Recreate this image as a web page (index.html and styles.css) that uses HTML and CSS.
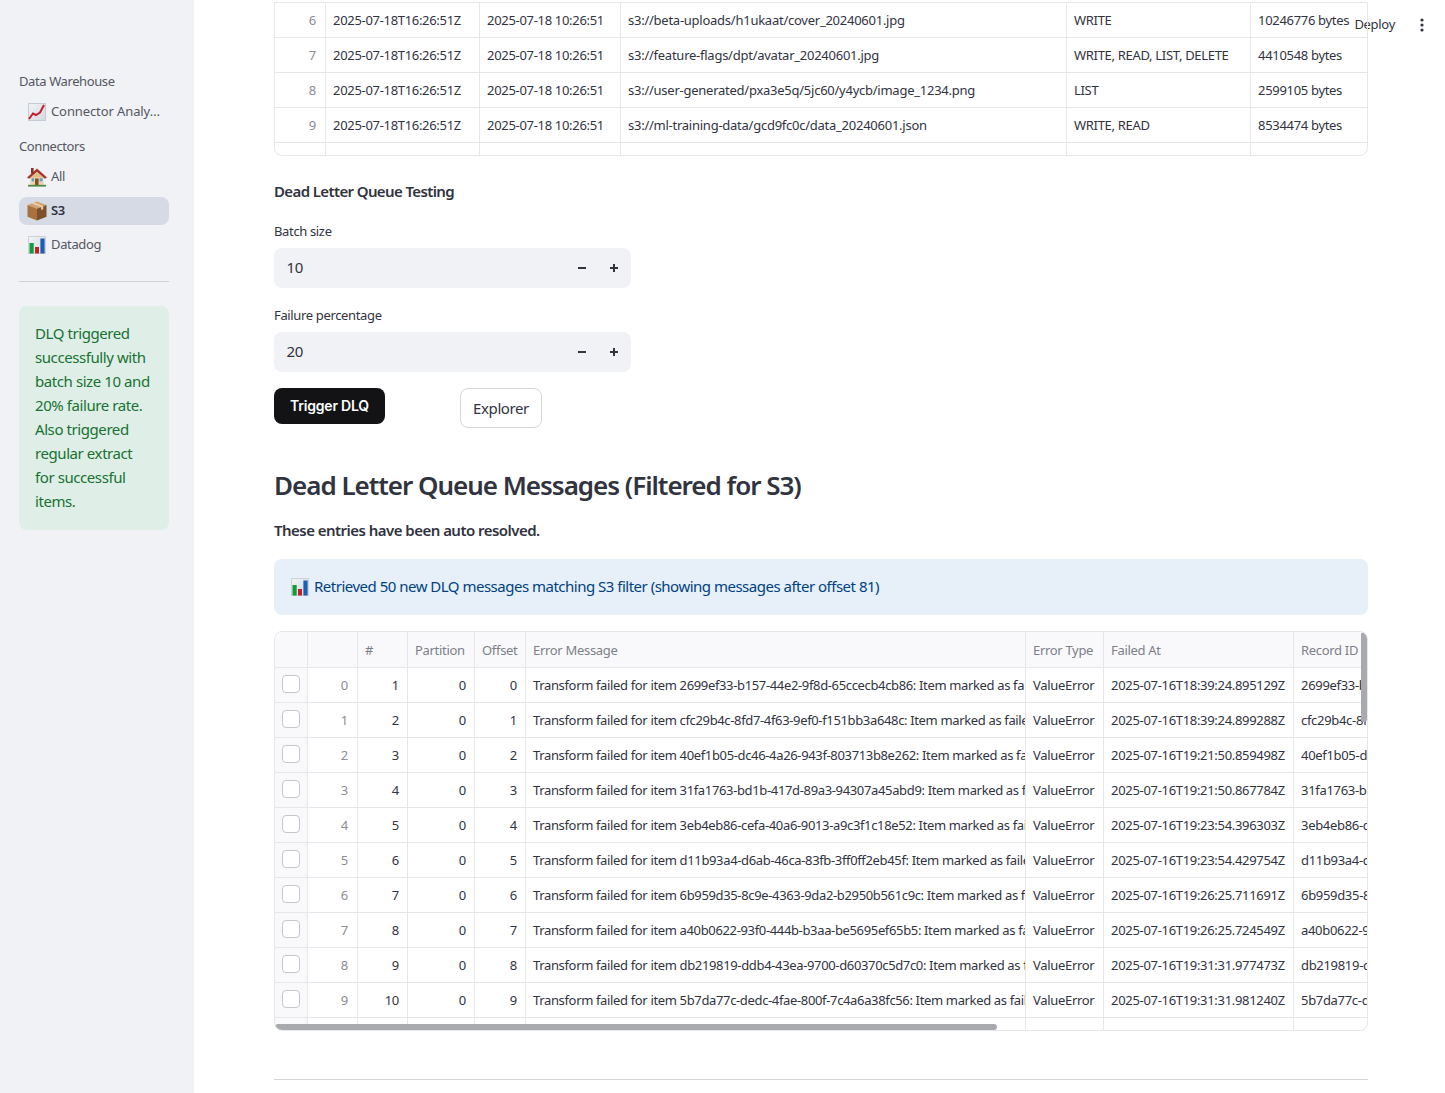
FILE: index.html
```html
<!DOCTYPE html>
<html lang="en">
<head>
    <meta charset="UTF-8">
    <title>S3 Connector</title>
    <link rel="stylesheet" href="styles.css">
</head>
<body>
    <svg class="defs" width="0" height="0">
        <linearGradient id="tile" x1="0" y1="0" x2="1" y2="1">
            <stop offset="0" stop-color="#f1f3f6"/>
            <stop offset="1" stop-color="#d3d9e1"/>
        </linearGradient>
        <symbol id="emoji-chart" viewBox="0 0 18 18">
            <rect x="0.5" y="0.5" width="17" height="17" fill="url(#tile)" stroke="#c5ccd6"/>
            <path d="M1 16 L5 10.5 L8 12 L12 9.5 L16 2" fill="none" stroke="#c3202b" stroke-width="2"/>
        </symbol>
        <symbol id="emoji-bars" viewBox="0 0 18 18">
            <rect x="0.5" y="0.5" width="17" height="17" fill="url(#tile)" stroke="#ccd2da"/>
            <rect x="1.5" y="7" width="4.2" height="10.5" fill="#0f9d3a"/>
            <rect x="7" y="11" width="4" height="6.5" fill="#c4202a"/>
            <rect x="12.4" y="2.5" width="4.2" height="15" fill="#1a5fb4"/>
        </symbol>
        <symbol id="emoji-house" viewBox="0 0 20 20">
            <rect x="3.5" y="9" width="13" height="9.5" fill="#efd5a5"/>
            <path d="M0 10.5 L10 1.5 L20 10.5 L17.8 11.8 L10 5 L2.2 11.8 Z" fill="#a5372d"/>
            <path d="M10 5 L3.5 10.5 L16.5 10.5 Z" fill="#e2bd85"/>
            <rect x="4" y="1" width="2.6" height="5.5" fill="#8a2f28"/>
            <rect x="8" y="11.5" width="3.6" height="7" fill="#7f4f33"/>
            <rect x="12.6" y="11.2" width="3" height="3.2" fill="#5f9fd6"/>
            <rect x="4.6" y="11.2" width="2.4" height="3.2" fill="#5f9fd6"/>
            <rect x="1" y="17.8" width="18" height="1.8" fill="#4f8a45"/>
        </symbol>
        <symbol id="emoji-box" viewBox="0 0 20 20">
            <path d="M10 0.5 L19.5 4 L10 7.8 L0.5 4 Z" fill="#d2a273"/>
            <path d="M0.5 4 L10 7.8 L10 19.5 L0.5 15.8 Z" fill="#a9713f"/>
            <path d="M19.5 4 L10 7.8 L10 19.5 L19.5 15.8 Z" fill="#7d4f2a"/>
            <path d="M4.8 2.4 L14.2 6 L14.2 9 L16.2 8.2 L16.2 5.2 L7 1.6 Z" fill="#ecd2ad"/>
        </symbol>
        <symbol id="icon-minus" viewBox="0 0 10 10">
            <rect x="1" y="4" width="8" height="2" fill="#31333f"/>
        </symbol>
        <symbol id="icon-plus" viewBox="0 0 10 10">
            <path d="M1 4h3V1h2v3h3v2H6v3H4V6H1z" fill="#31333f"/>
        </symbol>
    </svg>

    <div class="app">
        <!-- Sidebar -->
        <aside class="sidebar">
            <div class="nav-heading">Data Warehouse</div>
            <a class="nav-item"><svg class="nav-icon"><use href="#emoji-chart"/></svg><span class="nav-label nav-label-long">Connector Analy…</span></a>
            <div class="nav-heading nav-heading-second">Connectors</div>
            <a class="nav-item"><svg class="nav-icon nav-icon-wide"><use href="#emoji-house"/></svg><span class="nav-label">All</span></a>
            <a class="nav-item active"><svg class="nav-icon nav-icon-wide"><use href="#emoji-box"/></svg><span class="nav-label">S3</span></a>
            <a class="nav-item"><svg class="nav-icon"><use href="#emoji-bars"/></svg><span class="nav-label">Datadog</span></a>
            <hr class="nav-divider">
            <div class="success-box">DLQ triggered<br>successfully with<br>batch size 10 and<br>20% failure rate.<br>Also triggered<br>regular extract<br>for successful<br>items.</div>
        </aside>

        <!-- Main content -->
        <main class="main">
            <div class="toolbar">
                <span class="deploy">Deploy</span>
                <svg class="kebab" width="4" height="14" viewBox="0 0 4 14"><circle cx="2" cy="2" r="1.6"/><circle cx="2" cy="7" r="1.6"/><circle cx="2" cy="12" r="1.6"/></svg>
            </div>

            <div class="frame frame-top">
                <table class="grid grid-files">
                    <colgroup><col class="f0"><col class="f1"><col class="f2"><col class="f3"><col class="f4"><col class="f5"></colgroup>
                    <tr><td class="idx">6</td><td>2025-07-18T16:26:51Z</td><td>2025-07-18 10:26:51</td><td class="path">s3://beta-uploads/h1ukaat/cover_20240601.jpg</td><td>WRITE</td><td>10246776 bytes</td></tr>
                    <tr><td class="idx">7</td><td>2025-07-18T16:26:51Z</td><td>2025-07-18 10:26:51</td><td class="path">s3://feature-flags/dpt/avatar_20240601.jpg</td><td>WRITE, READ, LIST, DELETE</td><td>4410548 bytes</td></tr>
                    <tr><td class="idx">8</td><td>2025-07-18T16:26:51Z</td><td>2025-07-18 10:26:51</td><td class="path">s3://user-generated/pxa3e5q/5jc60/y4ycb/image_1234.png</td><td>LIST</td><td>2599105 bytes</td></tr>
                    <tr><td class="idx">9</td><td>2025-07-18T16:26:51Z</td><td>2025-07-18 10:26:51</td><td class="path">s3://ml-training-data/gcd9fc0c/data_20240601.json</td><td>WRITE, READ</td><td>8534474 bytes</td></tr>
                    <tr><td class="idx">10</td><td>2025-07-18T16:26:51Z</td><td>2025-07-18 10:26:51</td><td class="path">s3://customer-archive/x7k2m9p/v3hqt/l8wzn/backups/report_20240601.parquet</td><td>WRITE</td><td>6120934 bytes</td></tr>
                </table>
            </div>

            <h3 class="section-title">Dead Letter Queue Testing</h3>

            <label class="field-label field-first">Batch size</label>
            <div class="stepper">
                <span class="stepper-value">10</span>
                <svg class="stepper-btn"><use href="#icon-minus"/></svg>
                <svg class="stepper-btn"><use href="#icon-plus"/></svg>
            </div>

            <label class="field-label">Failure percentage</label>
            <div class="stepper">
                <span class="stepper-value">20</span>
                <svg class="stepper-btn"><use href="#icon-minus"/></svg>
                <svg class="stepper-btn"><use href="#icon-plus"/></svg>
            </div>

            <div class="actions">
                <button class="btn-primary">Trigger DLQ</button>
                <button class="btn-outline">Explorer</button>
            </div>

            <h2 class="page-heading">Dead Letter Queue Messages (Filtered for S3)</h2>
            <p class="resolved">These entries have been auto resolved.</p>

            <div class="info-box"><svg class="info-icon"><use href="#emoji-bars"/></svg><span class="info-text">Retrieved 50 new DLQ messages matching S3 filter (showing messages after offset 81)</span></div>

            <div class="frame frame-dlq">
                <table class="grid grid-dlq">
                    <colgroup><col class="d0"><col class="d1"><col class="d2"><col class="d3"><col class="d4"><col class="d5"><col class="d6"><col class="d7"><col class="d8"></colgroup>
                    <tr class="head"><th class="check"></th><th></th><th>#</th><th>Partition</th><th>Offset</th><th>Error Message</th><th>Error Type</th><th>Failed At</th><th>Record ID</th></tr>
                    <tr><td class="check"><span class="box"></span></td><td class="idx">0</td><td class="num">1</td><td class="num">0</td><td class="num">0</td><td class="msg">Transform failed for item 2699ef33-b157-44e2-9f8d-65ccecb4cb86: Item marked as failed</td><td>ValueError</td><td>2025-07-16T18:39:24.895129Z</td><td>2699ef33-b157-44e2-9f8d-65ccecb4cb86</td></tr>
                    <tr><td class="check"><span class="box"></span></td><td class="idx">1</td><td class="num">2</td><td class="num">0</td><td class="num">1</td><td class="msg">Transform failed for item cfc29b4c-8fd7-4f63-9ef0-f151bb3a648c: Item marked as failed</td><td>ValueError</td><td>2025-07-16T18:39:24.899288Z</td><td>cfc29b4c-8fd7-4f63-9ef0-f151bb3a648c</td></tr>
                    <tr><td class="check"><span class="box"></span></td><td class="idx">2</td><td class="num">3</td><td class="num">0</td><td class="num">2</td><td class="msg">Transform failed for item 40ef1b05-dc46-4a26-943f-803713b8e262: Item marked as failed</td><td>ValueError</td><td>2025-07-16T19:21:50.859498Z</td><td>40ef1b05-dc46-4a26-943f-803713b8e262</td></tr>
                    <tr><td class="check"><span class="box"></span></td><td class="idx">3</td><td class="num">4</td><td class="num">0</td><td class="num">3</td><td class="msg">Transform failed for item 31fa1763-bd1b-417d-89a3-94307a45abd9: Item marked as failed</td><td>ValueError</td><td>2025-07-16T19:21:50.867784Z</td><td>31fa1763-bd1b-417d-89a3-94307a45abd9</td></tr>
                    <tr><td class="check"><span class="box"></span></td><td class="idx">4</td><td class="num">5</td><td class="num">0</td><td class="num">4</td><td class="msg">Transform failed for item 3eb4eb86-cefa-40a6-9013-a9c3f1c18e52: Item marked as failed</td><td>ValueError</td><td>2025-07-16T19:23:54.396303Z</td><td>3eb4eb86-cefa-40a6-9013-a9c3f1c18e52</td></tr>
                    <tr><td class="check"><span class="box"></span></td><td class="idx">5</td><td class="num">6</td><td class="num">0</td><td class="num">5</td><td class="msg">Transform failed for item d11b93a4-d6ab-46ca-83fb-3ff0ff2eb45f: Item marked as failed</td><td>ValueError</td><td>2025-07-16T19:23:54.429754Z</td><td>d11b93a4-d6ab-46ca-83fb-3ff0ff2eb45f</td></tr>
                    <tr><td class="check"><span class="box"></span></td><td class="idx">6</td><td class="num">7</td><td class="num">0</td><td class="num">6</td><td class="msg">Transform failed for item 6b959d35-8c9e-4363-9da2-b2950b561c9c: Item marked as failed</td><td>ValueError</td><td>2025-07-16T19:26:25.711691Z</td><td>6b959d35-8c9e-4363-9da2-b2950b561c9c</td></tr>
                    <tr><td class="check"><span class="box"></span></td><td class="idx">7</td><td class="num">8</td><td class="num">0</td><td class="num">7</td><td class="msg">Transform failed for item a40b0622-93f0-444b-b3aa-be5695ef65b5: Item marked as failed</td><td>ValueError</td><td>2025-07-16T19:26:25.724549Z</td><td>a40b0622-93f0-444b-b3aa-be5695ef65b5</td></tr>
                    <tr><td class="check"><span class="box"></span></td><td class="idx">8</td><td class="num">9</td><td class="num">0</td><td class="num">8</td><td class="msg">Transform failed for item db219819-ddb4-43ea-9700-d60370c5d7c0: Item marked as failed</td><td>ValueError</td><td>2025-07-16T19:31:31.977473Z</td><td>db219819-ddb4-43ea-9700-d60370c5d7c0</td></tr>
                    <tr><td class="check"><span class="box"></span></td><td class="idx">9</td><td class="num">10</td><td class="num">0</td><td class="num">9</td><td class="msg">Transform failed for item 5b7da77c-dedc-4fae-800f-7c4a6a38fc56: Item marked as failed</td><td>ValueError</td><td>2025-07-16T19:31:31.981240Z</td><td>5b7da77c-dedc-4fae-800f-7c4a6a38fc56</td></tr>
                    <tr><td class="check"><span class="box"></span></td><td class="idx">10</td><td class="num">11</td><td class="num">0</td><td class="num">10</td><td class="msg">Transform failed for item 8e1fd2b7-4c0a-4d19-b6f3-2a97c1e05d48: Item marked as failed</td><td>ValueError</td><td>2025-07-16T19:34:12.402117Z</td><td>8e1fd2b7-4c0a-4d19-b6f3-2a97c1e05d48</td></tr>
                </table>
                <div class="scroll-x"></div>
                <div class="scroll-y"></div>
            </div>

            <hr class="main-divider">
        </main>
    </div>
</body>
</html>
```
FILE: styles.css
```css
/* Page shell */
html, body {
    margin: 0;
    padding: 0;
    height: 100%;
    overflow: hidden;
}

body {
    font-family: "Noto Sans", sans-serif;
    color: #31333f;
    background: #ffffff;
}

.defs {
    position: absolute;
}

.app {
    display: flex;
    height: 100vh;
}

/* Sidebar */
.sidebar {
    width: 194px;
    flex-shrink: 0;
    box-sizing: border-box;
    padding: 71px 25px 0 19px;
    background: #f0f2f6;
    display: flex;
    flex-direction: column;
}

.nav-heading {
    font-size: 13px;
    line-height: 20px;
    letter-spacing: -0.4px;
    color: #555762;
    margin-bottom: 7px;
}

.nav-heading-second {
    margin-top: 4px;
}

.nav-item {
    display: flex;
    align-items: center;
    gap: 5px;
    height: 28px;
    padding-left: 9px;
    margin-bottom: 6px;
    border-radius: 8px;
    font-size: 13px;
    letter-spacing: -0.35px;
    color: #555762;
}

.nav-item.active {
    background: #d5dae5;
    color: #31333f;
    font-weight: 600;
}

.nav-label {
    padding-bottom: 2px;
}

.nav-label-long {
    letter-spacing: -0.1px;
}

.nav-icon {
    width: 18px;
    height: 18px;
    flex-shrink: 0;
}

.nav-icon-wide {
    width: 20px;
    height: 20px;
    margin: 0 -1px;
}

.nav-divider {
    width: 100%;
    margin: 16px 0 24px;
    border: none;
    border-top: 1px solid #cfd1d6;
}

.success-box {
    padding: 15px 16px 17px;
    border-radius: 8px;
    background: #dfeee6;
    color: #177233;
    font-size: 15px;
    line-height: 24px;
    letter-spacing: -0.42px;
    white-space: nowrap;
}

/* Main column */
.main {
    flex: 1;
    min-width: 0;
    box-sizing: border-box;
    padding: 2px 77px 0 80px;
    position: relative;
    overflow: hidden;
}

.toolbar {
    position: absolute;
    top: 15px;
    right: 21px;
    display: flex;
    align-items: center;
    gap: 25px;
    font-size: 13px;
    line-height: 20px;
    letter-spacing: -0.3px;
}

.deploy {
    margin-top: -1px;
}

.kebab {
    fill: #31333f;
    margin-top: 1px;
}

/* Data tables */
.frame {
    position: relative;
    overflow: hidden;
    border: 1px solid #e6e7ea;
    border-radius: 8px;
    box-sizing: border-box;
}

.frame-top {
    height: 154px;
    border-radius: 0 0 8px 8px;
}

.frame-dlq {
    height: 400px;
}

.grid {
    width: 1092px;
    table-layout: fixed;
    border-collapse: separate;
    border-spacing: 0;
    font-size: 13px;
    letter-spacing: -0.31px;
}

.grid td, .grid th {
    box-sizing: border-box;
    height: 35px;
    padding: 0 7px;
    overflow: hidden;
    white-space: nowrap;
    font-weight: 400;
    text-align: left;
    border-right: 1px solid #e6e7ea;
    border-bottom: 1px solid #e6e7ea;
}

.grid td:last-child, .grid th:last-child {
    border-right: none;
}

.grid .head th {
    height: 36px;
    background: #f9f9fb;
    color: #7d7f89;
}

.grid td.path {
    letter-spacing: -0.25px;
}

.grid td.msg {
    letter-spacing: -0.35px;
}

.grid td.idx {
    text-align: right;
    color: #8a8c96;
    padding-right: 9px;
}

.grid td.num {
    text-align: right;
    padding-right: 8px;
}

.grid td.check {
    background: #f9f9fb;
    padding: 0 0 2px 7px;
}

.box {
    display: block;
    box-sizing: border-box;
    width: 18px;
    height: 18px;
    background: #ffffff;
    border: 1px solid #c6c7cc;
    border-radius: 4px;
}

.f0 { width: 51px; }
.f1 { width: 154px; }
.f2 { width: 141px; }
.f3 { width: 446px; }
.f4 { width: 184px; }
.f5 { width: 116px; }

.d0 { width: 33px; }
.d1 { width: 50px; }
.d2 { width: 50px; }
.d3 { width: 67px; }
.d4 { width: 51px; }
.d5 { width: 500px; }
.d6 { width: 78px; }
.d7 { width: 190px; }
.d8 { width: 73px; }

.scroll-x {
    position: absolute;
    left: 0;
    bottom: 0;
    width: 722px;
    height: 6px;
    background: #a9aaae;
    border-radius: 3px;
}

.scroll-y {
    position: absolute;
    top: 0;
    right: 0;
    width: 6px;
    height: 90px;
    background: #a9aaae;
    border-radius: 3px;
}

/* Form section */
.section-title {
    margin: 25px 0 0;
    font-size: 15px;
    line-height: 20px;
    font-weight: 600;
    letter-spacing: -0.62px;
}

.field-label {
    display: block;
    margin: 17px 0 7px;
    font-size: 13px;
    line-height: 20px;
    letter-spacing: -0.35px;
}

.field-first {
    margin-top: 20px;
}

.stepper {
    width: 357px;
    height: 40px;
    box-sizing: border-box;
    display: flex;
    align-items: center;
    padding: 0 12px 0 13px;
    background: #f0f2f6;
    border-radius: 8px;
    font-size: 15px;
}

.stepper-value {
    flex: 1;
    letter-spacing: -0.4px;
    padding-bottom: 2px;
    margin-left: -0.5px;
}

.stepper-btn {
    width: 10px;
    height: 10px;
    margin-left: 22px;
}

.actions {
    display: flex;
    align-items: flex-start;
    margin-top: 16px;
}

.btn-primary {
    width: 111px;
    height: 36px;
    padding: 0 0 2px;
    border: none;
    border-radius: 8px;
    background: #131316;
    color: #ffffff;
    font-family: Inter, sans-serif;
    font-size: 14px;
    font-weight: 600;
    letter-spacing: -0.2px;
}

.btn-outline {
    width: 82px;
    height: 40px;
    margin-left: 75px;
    background: #ffffff;
    border: 1px solid #d5d6da;
    border-radius: 8px;
    color: #31333f;
    font-family: "Noto Sans", sans-serif;
    font-size: 15px;
    letter-spacing: -0.4px;
}

.page-heading {
    margin: 35px 0 0;
    font-size: 26px;
    line-height: 44px;
    font-weight: 600;
    letter-spacing: -1.02px;
}

.resolved {
    margin: 11px 0 0;
    font-size: 15px;
    line-height: 24px;
    font-weight: 600;
    letter-spacing: -0.53px;
}

.info-box {
    display: flex;
    align-items: center;
    gap: 5px;
    height: 56px;
    box-sizing: border-box;
    margin-top: 17px;
    padding: 0 17px;
    background: #e7eff9;
    border-radius: 8px;
    color: #004280;
    font-size: 15px;
    letter-spacing: -0.5px;
}

.info-text {
    padding-bottom: 2px;
}

.info-icon {
    width: 18px;
    height: 18px;
}

.frame-dlq {
    margin-top: 16px;
}

.main-divider {
    margin: 48px 0 0;
    border: none;
    border-top: 1px solid #d5d6da;
}
```
